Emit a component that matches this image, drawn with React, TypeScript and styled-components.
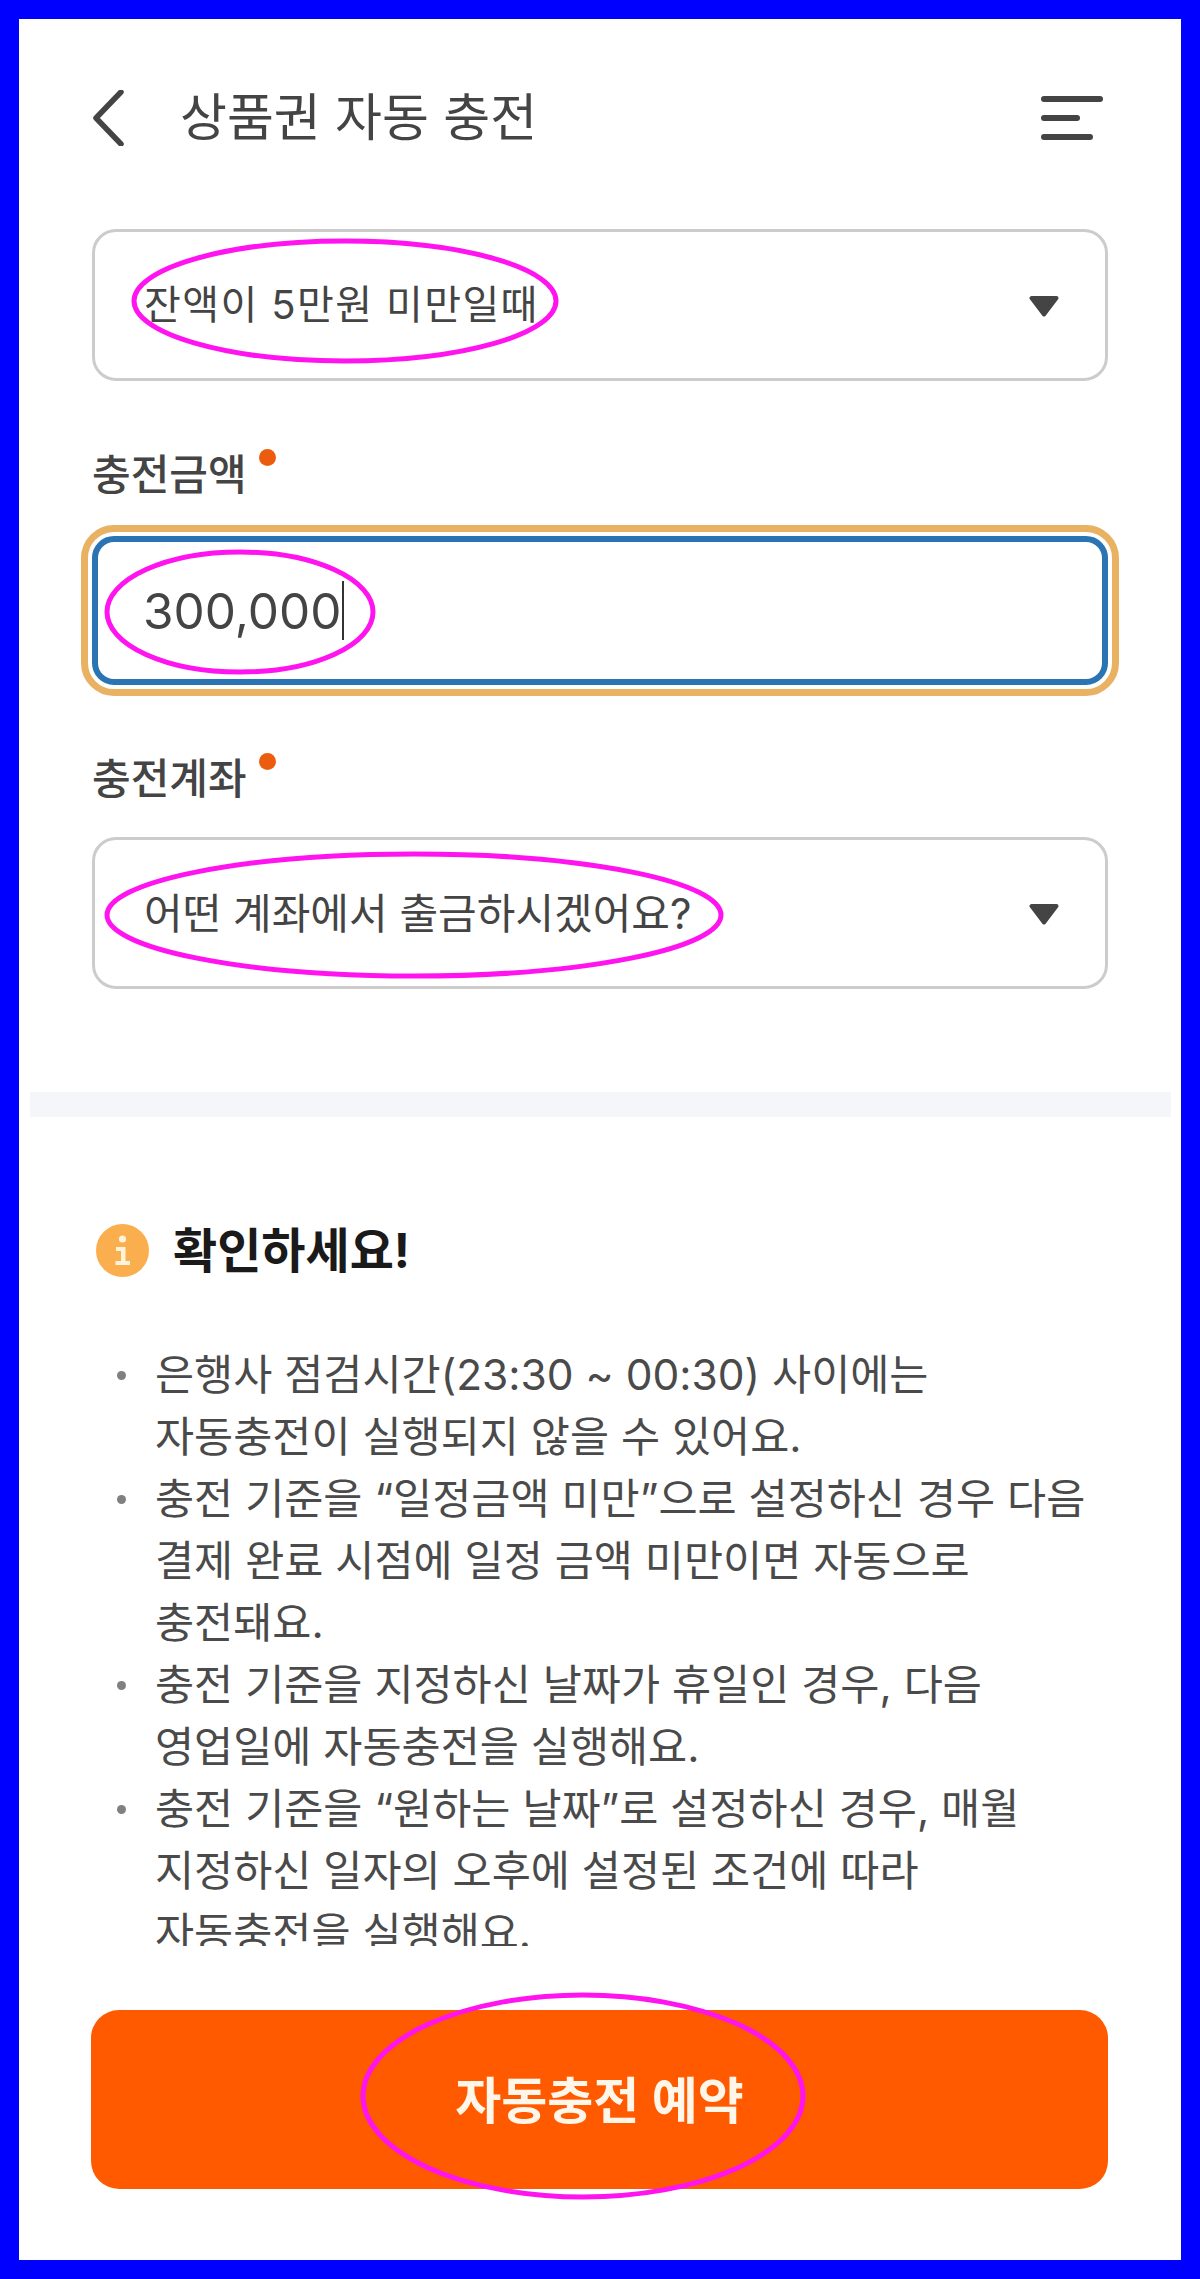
import React from "react";
import styled, { createGlobalStyle } from "styled-components";

const GlobalStyle = createGlobalStyle`
  html, body {
    margin: 0;
    padding: 0;
    background: #0000ff;
  }
  * {
    box-sizing: border-box;
  }
`;

const notes = [
  "은행사 점검시간(23:30 ~ 00:30) 사이에는\n자동충전이 실행되지 않을 수 있어요.",
  "충전 기준을 “일정금액 미만”으로 설정하신 경우 다음\n결제 완료 시점에 일정 금액 미만이면 자동으로\n충전돼요.",
  "충전 기준을 지정하신 날짜가 휴일인 경우, 다음\n영업일에 자동충전을 실행해요.",
  "충전 기준을 “원하는 날짜”로 설정하신 경우, 매월\n지정하신 일자의 오후에 설정된 조건에 따라\n자동충전을 실행해요.",
];

const Caret: React.FC = () => (
  <CaretIcon viewBox="0 0 32 22" aria-hidden="true">
    <path d="M3.500 3h25L16 19.500z" fill="#444" stroke="#444" strokeWidth="4" strokeLinejoin="round" />
  </CaretIcon>
);

const Required: React.FC<{ children: React.ReactNode }> = ({ children }) => (
  <Label>
    {children}
    <Dot />
  </Label>
);

export default function App() {
  return (
    <Page>
      <GlobalStyle />
      <Card>
        <Header>
          <HeaderLeft>
            <svg width="32" height="56" viewBox="0 0 32 56" aria-hidden="true">
              <path d="M29 2 4 28l25 26" fill="none" stroke="#444" strokeWidth="5.500" strokeLinecap="round" strokeLinejoin="round" />
            </svg>
            <Title>상품권 자동 충전</Title>
          </HeaderLeft>
          <Menu aria-hidden="true">
            <MenuBar $width={62} />
            <MenuBar $width={39} />
            <MenuBar $width={52} />
          </Menu>
        </Header>

        <Form>
          <Select $size={40} $tracking={1.4}>
            <SelectText>잔액이 5만원 미만일때</SelectText>
            <Caret />
          </Select>
          <Required>충전금액</Required>
          <AmountInput>
            <span>300,000</span>
            <TextCursor />
          </AmountInput>
          <Required>충전계좌</Required>
          <Select $size={42} $tracking={0}>
            <SelectText>어떤 계좌에서 출금하시겠어요?</SelectText>
            <Caret />
          </Select>
        </Form>

        <Band />

        <Notice>
          <NoticeHead>
            <svg width="53" height="53" viewBox="0 0 53 53" aria-hidden="true">
              <circle cx="26.5" cy="26.5" r="26.5" fill="#fbae4e" />
              <circle cx="26.5" cy="15" r="3.6" fill="#fff3dc" />
              <path d="M20 23h9.500v14H34v4H19.500v-4h5.500V27H20z" fill="#fff3dc" />
            </svg>
            <NoticeTitle>확인하세요!</NoticeTitle>
          </NoticeHead>
          <NoticeList>
            {notes.map((note) => (
              <NoticeItem key={note}>{note}</NoticeItem>
            ))}
          </NoticeList>
        </Notice>

        <SubmitButton type="button">자동충전 예약</SubmitButton>
      </Card>

      <Marks viewBox="0 0 1200 2279" aria-hidden="true">
        <ellipse cx="345" cy="301" rx="211" ry="60" />
        <ellipse cx="240" cy="612" rx="133" ry="60" />
        <ellipse cx="414" cy="915" rx="307" ry="61" />
        <ellipse cx="583" cy="2096" rx="220" ry="101" />
      </Marks>
    </Page>
  );
}

const Page = styled.div`
  position: relative;
  width: 1200px;
  height: 2279px;
  padding: 19px;
  background: #0000ff;
  font-family: Inter, "Noto Sans CJK KR", "Noto Sans", sans-serif;
  color: #444;
`;

const Card = styled.main`
  display: flex;
  flex-direction: column;
  height: 2241px;
  background: #fff;
`;

const Header = styled.header`
  display: flex;
  align-items: center;
  justify-content: space-between;
  height: 198px;
  padding: 0 78px 0 73px;
`;

const HeaderLeft = styled.div`
  display: flex;
  align-items: center;
  gap: 56px;
`;

const Title = styled.h1`
  margin: 0;
  font-size: 51px;
  font-weight: 400;
  line-height: 60px;
  color: #444;
`;

const Menu = styled.div`
  display: flex;
  flex-direction: column;
  gap: 13px;
  width: 62px;
`;

const MenuBar = styled.span<{ $width: number }>`
  display: block;
  width: ${(p) => p.$width}px;
  height: 6px;
  border-radius: 3px;
  background: #444;
`;

const Form = styled.section`
  display: flex;
  flex-direction: column;
  padding: 12px 73px 0;
`;

const Select = styled.div<{ $size: number; $tracking: number }>`
  display: flex;
  align-items: center;
  justify-content: space-between;
  height: 152px;
  padding: 0 45px 0 49px;
  border: 3px solid #ccc;
  border-radius: 24px;
  font-size: ${(p) => p.$size}px;
  letter-spacing: ${(p) => p.$tracking}px;
  color: #444;
`;

const SelectText = styled.span`
  padding-bottom: 6px;
`;

const CaretIcon = styled.svg`
  width: 32px;
  height: 22px;
  margin-top: 2px;
`;

const Label = styled.div`
  display: flex;
  align-items: flex-start;
  height: 56px;
  margin: 66px 0 30px;
  font-size: 42px;
  font-weight: 500;
  line-height: 56px;
  color: #444;
`;

const Dot = styled.i`
  width: 17px;
  height: 17px;
  margin: 2px 0 0 12px;
  border-radius: 50%;
  background: #ec5c0e;
`;

const AmountInput = styled.div`
  display: flex;
  align-items: center;
  height: 149px;
  margin-top: 3px;
  padding: 0 0 0 45px;
  border: 6px solid #2b74b4;
  border-radius: 22px;
  outline: 7px solid #e9b162;
  outline-offset: 4px;
  font-size: 49.5px;
  color: #444;
`;

const TextCursor = styled.i`
  width: 2px;
  height: 59px;
  margin-left: 1px;
  background: #333;
`;

const Band = styled.div`
  flex: none;
  height: 25px;
  margin: 103px 10px 0 11px;
  background: #f5f6fa;
`;

const Notice = styled.section`
  display: flex;
  flex-direction: column;
  padding: 107px 73px 0;
`;

const NoticeHead = styled.div`
  display: flex;
  align-items: center;
  gap: 24px;
  height: 53px;
  padding-left: 4px;
`;

const NoticeTitle = styled.h2`
  margin: 0;
  font-size: 48px;
  font-weight: 700;
  line-height: 53px;
  color: #1a1a1a;
`;

const NoticeList = styled.ul`
  height: 602px;
  margin: 67px 0 0;
  padding: 0;
  overflow: hidden;
  list-style: none;
`;

const NoticeItem = styled.li`
  position: relative;
  padding-left: 63px;
  font-size: 42.5px;
  line-height: 62px;
  white-space: pre-line;
  color: #4a4a4a;

  &::before {
    content: "";
    position: absolute;
    left: 25px;
    top: 27px;
    width: 9px;
    height: 9px;
    border-radius: 50%;
    background: #808080;
  }
`;

const SubmitButton = styled.button`
  flex: none;
  height: 179px;
  margin: 64px 73px 0 72px;
  padding: 0 0 6px;
  border: 0;
  border-radius: 28px;
  background: #ff5a00;
  font-family: inherit;
  font-size: 50px;
  font-weight: 600;
  color: #fff6ea;
`;

const Marks = styled.svg`
  position: absolute;
  top: 0;
  left: 0;
  width: 1200px;
  height: 2279px;
  pointer-events: none;

  ellipse {
    fill: none;
    stroke: #ff14f0;
    stroke-width: 5;
  }
`;
